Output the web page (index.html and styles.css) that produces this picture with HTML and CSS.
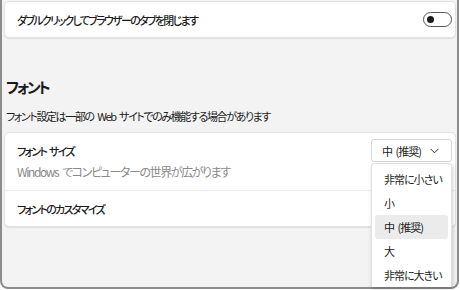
FILE: index.html
```html
<!DOCTYPE html>
<html lang="ja">
<head>
<meta charset="utf-8">
<link rel="stylesheet" href="styles.css">
</head>
<body>
<div class="frame">
  <div class="card top-card">
    <span class="label">ダブルクリックしてブラウザーのタブを閉じます</span>
    <span class="toggle"><span class="knob"></span></span>
  </div>
  <h2 class="heading">フォント</h2>
  <p class="note">フォント設定は一部の Web サイトでのみ機能する場合があります</p>
  <div class="card font-card">
    <div class="row size-row">
      <div class="size-text">
        <div class="label">フォント サイズ</div>
        <div class="preview">Windows でコンピューターの世界が広がります</div>
      </div>
      <div class="dropdown">
        <div class="select">
          <span>中 (推奨)</span>
          <svg class="chev" width="9" height="6" viewBox="0 0 9 6"><path d="M0.5 0.8 L4.5 4.8 L8.5 0.8" fill="none" stroke="#333" stroke-width="1"/></svg>
        </div>
        <ul class="menu">
          <li>非常に小さい</li>
          <li>小</li>
          <li class="selected">中 (推奨)</li>
          <li>大</li>
          <li>非常に大きい</li>
        </ul>
      </div>
    </div>
    <div class="row custom-row">
      <span class="label">フォントのカスタマイズ</span>
    </div>
  </div>
</div>
</body>
</html>
```
FILE: styles.css
```css
html, body {
  margin: 0;
  padding: 0;
  background: #ffffff;
  overflow: hidden;
}
body {
  width: 460px;
  height: 290px;
  font-family: "Noto Sans CJK JP", "Noto Sans", sans-serif;
  font-feature-settings: "palt";
  color: #1b1b1b;
}
.frame {
  box-sizing: border-box;
  width: 459px;
  height: 289px;
  border: 2px solid #8c8c8c;
  border-top: none;
  border-radius: 0 0 8px 8px;
  background: #f3f3f3;
  padding: 1px 1px 0 2px;
}
.card {
  background: #ffffff;
  border: 1px solid #e3e3e3;
  border-radius: 5px;
  box-shadow: 0 1px 1px rgba(0,0,0,0.08);
}
.top-card {
  height: 35px;
  display: flex;
  align-items: center;
  justify-content: space-between;
  padding: 0 3px 0 12px;
}
.label {
  font-size: 11px;
  letter-spacing: -1.7px;
  font-weight: 500;
}
.toggle {
  box-sizing: border-box;
  width: 29px;
  height: 15px;
  border: 1px solid #555;
  border-radius: 8px;
  display: flex;
  align-items: center;
  padding-left: 3px;
}
.knob {
  width: 7px;
  height: 7px;
  border-radius: 50%;
  background: #1b1b1b;
}
.heading {
  margin: 38px 0 0 2px;
  font-size: 15px;
  font-weight: 700;
  letter-spacing: -2.4px;
  line-height: 22px;
}
.note {
  margin: 9px 0 0 2px;
  font-size: 11px;
  letter-spacing: -1.4px;
  word-spacing: 2.5px;
  line-height: 18px;
}
.font-card {
  margin-top: 7px;
}
.row {
  display: flex;
  align-items: center;
  justify-content: space-between;
  padding: 0 3px 0 12px;
}
.size-row {
  height: 57px;
  align-items: flex-start;
  border-bottom: 1px solid #ececec;
}
.size-text {
  padding-top: 9px;
}
.size-text .label {
  line-height: 18px;
  word-spacing: 2px;
}
.preview {
  font-size: 12px;
  color: #8a8a8a;
  letter-spacing: -1.4px;
  word-spacing: 2.5px;
  line-height: 20px;
  margin-top: 2px;
}
.custom-row {
  height: 35px;
}
.dropdown {
  position: relative;
  margin-top: 6px;
}
.select {
  box-sizing: border-box;
  width: 81px;
  height: 23px;
  border: 1px solid #d6d6d6;
  border-radius: 3px;
  background: #fff;
  display: flex;
  align-items: center;
  justify-content: space-between;
  padding: 0 12px 0 10px;
  font-size: 11px;
  letter-spacing: -1px;
  word-spacing: 2px;
}
.chev {
  display: block;
}
.menu {
  position: absolute;
  top: 24px;
  left: 0;
  width: 81px;
  box-sizing: border-box;
  margin: 0;
  padding: 3px 3px 0 3px;
  list-style: none;
  background: #fff;
  border: 1px solid #e0e0e0;
  border-bottom: none;
  border-radius: 4px 4px 0 0;
  box-shadow: 1px 2px 4px rgba(0,0,0,0.18);
}
.menu li {
  height: 24px;
  line-height: 24px;
  padding-left: 9px;
  font-size: 11px;
  letter-spacing: -1px;
  word-spacing: 2px;
  border-radius: 3px;
}
.menu li.selected {
  background: #ebebeb;
}
```
